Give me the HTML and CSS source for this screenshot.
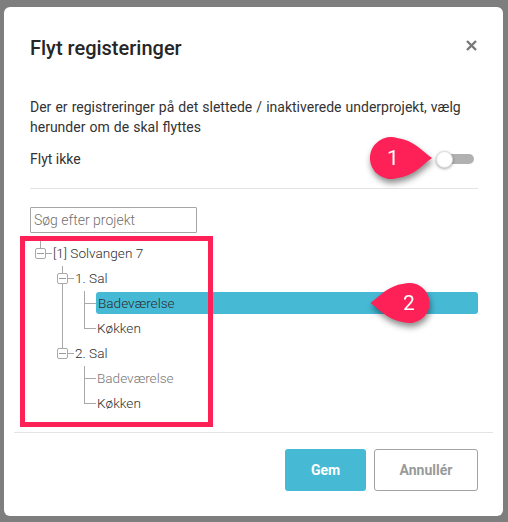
FILE: index.html
```html
<!DOCTYPE html>
<html lang="da">
<head>
  <meta charset="UTF-8" />
  <meta name="viewport" content="width=device-width, initial-scale=1.0"/>
  <title>Flyt registeringer</title>
  <link rel="stylesheet" href="styles.css">
</head>
<body>
  <div class="modal">
    <header class="modal-header">
      <h1>Flyt registeringer</h1>
      <button class="close" aria-label="Luk">
        <svg width="11" height="11" viewBox="0 0 11 11">
          <path d="M1 1 L10 10 M10 1 L1 10" stroke="#777" stroke-width="2.4" stroke-linecap="butt"/>
        </svg>
      </button>
    </header>

    <section class="modal-body">
      <p class="intro">Der er registreringer på det slettede / inaktiverede underprojekt, vælg herunder om de skal flyttes</p>

      <div class="switch-row">
        <span>Flyt ikke</span>
        <span class="toggle"><span class="knob"></span></span>
      </div>

      <hr class="divider">

      <input type="text" class="search" placeholder="Søg efter projekt">

      <!-- project tree -->
      <div class="tree">
        <div class="row">
          <span class="cell box-cell stub"><span class="exp"></span></span>
          <span class="label">[1] Solvangen 7</span>
        </div>
        <div class="row">
          <span class="cell"></span>
          <span class="cell box-cell through"><span class="exp"></span></span>
          <span class="label">1. Sal</span>
        </div>
        <div class="row">
          <span class="cell"></span>
          <span class="cell pipe"></span>
          <span class="cell tee"></span>
          <span class="label selected">Badeværelse</span>
        </div>
        <div class="row">
          <span class="cell"></span>
          <span class="cell pipe"></span>
          <span class="cell elbow"></span>
          <span class="label">Køkken</span>
        </div>
        <div class="row">
          <span class="cell"></span>
          <span class="cell box-cell stub"><span class="exp"></span></span>
          <span class="label">2. Sal</span>
        </div>
        <div class="row">
          <span class="cell"></span>
          <span class="cell"></span>
          <span class="cell tee"></span>
          <span class="label muted">Badeværelse</span>
        </div>
        <div class="row">
          <span class="cell"></span>
          <span class="cell"></span>
          <span class="cell elbow"></span>
          <span class="label">Køkken</span>
        </div>

        <div class="mark-box"></div>
      </div>
    </section>

    <footer class="modal-footer">
      <button class="btn btn-primary">Gem</button>
      <button class="btn btn-default">Annullér</button>
    </footer>

    <!-- annotation pins -->
    <div class="pin pin-1">
      <svg width="62" height="42" viewBox="0 0 62 42">
        <path d="M62 21 C52 14 44 3 27 0.9 A21 21 0 1 0 27 41.1 C44 39 52 28 62 21 Z" fill="#fe2157"/>
      </svg>
      <span class="pin-num">1</span>
    </div>
    <div class="pin pin-2">
      <svg width="60" height="40" viewBox="0 0 62 42">
        <path d="M0 21 C10 14 18 3 35 0.9 A21 21 0 1 1 35 41.1 C18 39 10 28 0 21 Z" fill="#fe2157"/>
      </svg>
      <span class="pin-num">2</span>
    </div>
  </div>
</body>
</html>
```

FILE: styles.css
```css
body {
  margin: 0;
  font-family: Roboto, 'Liberation Sans', sans-serif;
  background: #7e7e7e;
  color: #333;
}
.modal {
  position: relative;
  width: 499px;
  height: 509px;
  margin: 7px 0 0 4px;
  background: white;
  border-radius: 6px;
  display: flex;
  flex-direction: column;
}
.modal-header {
  display: flex;
  justify-content: space-between;
  align-items: center;
  padding: 29px 26px 0 26px;
}
.modal-header h1 {
  margin: 0;
  font-size: 20px;
  line-height: 24px;
  font-weight: 500;
  color: #262626;
}
.close {
  background: none;
  border: none;
  padding: 0;
  width: 11px;
  height: 11px;
  margin-top: -6px;
  cursor: pointer;
}
.close svg {
  display: block;
}
.modal-body {
  flex: 1;
  padding: 37px 25px 0 26px;
  font-size: 14px;
}
.intro {
  margin: 0;
  line-height: 20px;
  word-spacing: 0.6px;
}
.switch-row {
  margin-top: 12px;
  height: 20px;
  display: flex;
  justify-content: space-between;
  align-items: center;
}
.toggle {
  width: 37px;
  height: 10px;
  margin-right: 4px;
  border-radius: 5px;
  background: #b1b1b1;
  display: flex;
  align-items: center;
}
.knob {
  width: 17px;
  height: 17px;
  margin-left: -1px;
  border-radius: 50%;
  background: white;
  border: 1px solid #ddd;
  box-sizing: border-box;
  box-shadow: 0 1px 3px rgba(0,0,0,0.35);
}
.divider {
  margin: 19px 0 0;
  border: none;
  border-top: 1px solid #e4e4e4;
}
.search {
  display: block;
  margin-top: 18px;
  width: 167px;
  height: 26px;
  box-sizing: border-box;
  border: 1px solid #a6a6a6;
  border-radius: 1px;
  padding: 0 3px;
  font-family: Roboto, sans-serif;
  font-size: 14px;
  font-weight: 300;
  color: #333;
}
.search::placeholder {
  color: #6f6f6f;
}
.tree {
  position: relative;
  margin-top: 8px;
  font-size: 13.6px;
  font-weight: 300;
}
.row {
  display: flex;
  height: 25px;
}
.cell {
  width: 22px;
  height: 25px;
  flex: none;
  display: flex;
  align-items: center;
}
.pipe {
  background: linear-gradient(#a9a9a9, #a9a9a9) 10px 0 / 1px 25px no-repeat;
}
.tee {
  background:
    linear-gradient(#a9a9a9, #a9a9a9) 10px 0 / 1px 25px no-repeat,
    linear-gradient(#a9a9a9, #a9a9a9) 10px 12px / 12px 1px no-repeat;
}
.elbow {
  background:
    linear-gradient(#a9a9a9, #a9a9a9) 10px 0 / 1px 13px no-repeat,
    linear-gradient(#a9a9a9, #a9a9a9) 10px 12px / 12px 1px no-repeat;
}
.box-cell.stub {
  background:
    linear-gradient(#a9a9a9, #a9a9a9) 10px 0 / 1px 8px no-repeat,
    linear-gradient(#a9a9a9, #a9a9a9) 10px 12px / 12px 1px no-repeat;
}
.box-cell.through {
  background:
    linear-gradient(#a9a9a9, #a9a9a9) 10px 0 / 1px 25px no-repeat,
    linear-gradient(#a9a9a9, #a9a9a9) 10px 12px / 12px 1px no-repeat;
}
.exp {
  width: 11px;
  height: 11px;
  margin-left: 5px;
  box-sizing: border-box;
  border: 1px solid #a9a9a9;
  border-radius: 2px;
  background: white;
  display: flex;
  align-items: center;
  justify-content: center;
}
.exp::after {
  content: "";
  width: 7px;
  height: 1px;
  background: #999;
}
.label {
  height: 22px;
  line-height: 22px;
  margin-top: 1px;
  padding-left: 1px;
  color: #2e2e2e;
  white-space: nowrap;
}
.label.selected {
  flex: 1;
  background: #46bad5;
  border-radius: 3px;
  padding-left: 2px;
}
.label.muted {
  color: #777;
}
.mark-box {
  position: absolute;
  left: -10px;
  top: -5px;
  width: 193px;
  height: 191px;
  box-sizing: border-box;
  border: 5px solid #fe2157;
}
.modal-footer {
  margin: 0 10px;
  border-top: 1px solid #e4e4e4;
  padding: 16px 15px 25px 0;
  display: flex;
  justify-content: flex-end;
  gap: 8px;
}
.btn {
  height: 42px;
  border-radius: 3px;
  font-family: Roboto, sans-serif;
  font-size: 14px;
  font-weight: bold;
  cursor: pointer;
}
.btn-primary {
  width: 81px;
  background: #46bad5;
  color: white;
  border: none;
}
.btn-default {
  width: 104px;
  background: white;
  color: #9a9a9a;
  border: 1px solid #a3a3a3;
}
.pin {
  position: absolute;
  filter: drop-shadow(1px 4px 3px rgba(0,0,0,0.45));
  display: flex;
  align-items: center;
}
.pin svg {
  display: block;
}
.pin-1 {
  left: 366px;
  top: 130px;
}
.pin-2 {
  left: 366px;
  top: 276px;
}
.pin-num {
  position: absolute;
  top: 0;
  height: 100%;
  display: flex;
  align-items: center;
  justify-content: center;
  width: 42px;
  color: white;
  font-size: 21px;
}
.pin-1 .pin-num {
  left: 2px;
}
.pin-2 .pin-num {
  left: 19px;
  width: 40px;
}
```
